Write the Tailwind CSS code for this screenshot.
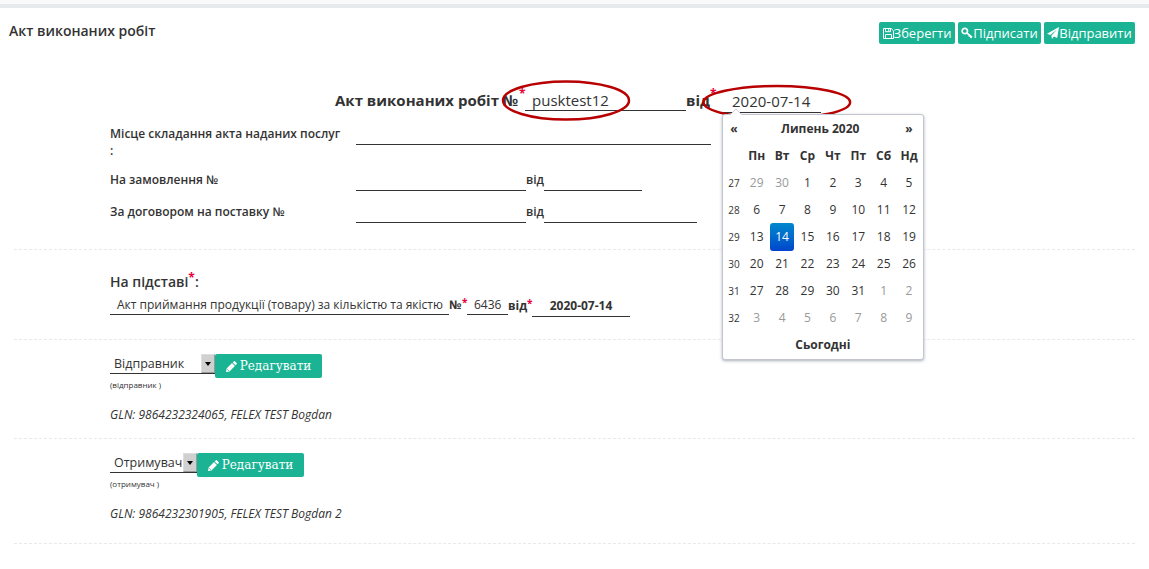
<!DOCTYPE html>
<html lang="uk">
<head>
<meta charset="utf-8">
<title>Акт виконаних робіт</title>
<script src="https://cdn.jsdelivr.net/npm/@tailwindcss/browser@4"></script>
</head>
<body class="relative h-[569px] w-[1149px] overflow-hidden bg-white font-['Open_Sans','Noto_Sans',sans-serif] text-[13px] leading-[18px] text-[#333] whitespace-nowrap">
<div class="h-2 border-b-4 border-[#e7eaec] bg-[#f9f8fa]"></div>
<header class="flex h-[72px] items-start justify-between pr-[14px] pl-[9px]">
  <h1 class="pt-[13px] text-[14px] font-semibold leading-5">Акт виконаних робіт</h1>
  <div class="flex gap-[3px] pt-[14px] text-white">
    <button class="flex h-[22px] w-[76px] items-center justify-center rounded-[2px] bg-[#1ab394]">
      <svg class="h-[11px] w-[11px] shrink-0" viewBox="0 0 11 11" fill="none" stroke="currentColor"><path d="M.5.5h7.7l2.3 2.3v7.7H.5zM2.5.5v3.2h5V.5M2.5 10.500V6.500h6v4M5.700 1v2"/></svg>Зберегти</button>
    <button class="flex h-[22px] w-[83px] items-center justify-center rounded-[2px] bg-[#1ab394]">
      <svg class="h-[12px] w-[12px] shrink-0" viewBox="0 0 12 12" fill="none" stroke="currentColor" stroke-width="1.700"><circle cx="3.800" cy="4" r="2.700"/><path d="M5.700 5.900l5.200 4.300M7.800 9.500l1.300-1.700M9.500 11l1.300-1.700"/></svg>Підписати</button>
    <button class="flex h-[22px] w-[91px] items-center justify-center rounded-[2px] bg-[#1ab394]">
      <svg class="h-[12px] w-[12px] shrink-0" viewBox="0 0 12 12" fill="currentColor"><path d="M12 0L10.200 11 6.800 9.600 5 12 4.300 8.800 10 2.500 3.200 8.100 0 6.800z"/></svg>Відправити</button>
  </div>
</header>
<main class="px-[14px]">
  <section class="h-[170px] border-b border-dashed border-[#e7eaec] pl-[96px]">
    <div class="flex h-[45px] items-start pl-[225px] text-[15px] leading-5">
      <b class="w-[184px] pt-[10px]">Акт виконаних робіт №</b>
      <span class="w-[6px] pt-[6px] text-[12px] font-bold leading-4 text-[#e8003c]">*</span>
      <span class="h-[31px] w-[161px] border-b border-[#333] pt-[10px] pl-[7px]">pusktest12</span>
      <b class="w-[24px] pt-[10px]">від</b>
      <span class="w-[10px] pt-[6px] text-[12px] font-bold leading-4 text-[#e8003c]">*</span>
      <span class="h-[33px] w-[101px] border-b border-[#333] pt-[11px] pl-[12px]">2020-07-14</span>
    </div>
    <div class="flex h-[46px] items-start text-[12px] font-semibold leading-[17px]">
      <span class="w-[246px]">Місце складання акта наданих послуг<br>:</span>
      <span class="h-[20px] w-[355px] border-b border-[#333]"></span>
    </div>
    <div class="flex h-[32px] items-start text-[12px] font-semibold leading-[17px]">
      <span class="w-[246px]">На замовлення №</span>
      <span class="h-[20px] w-[170px] border-b border-[#333]"></span>
      <span class="w-[18px]">від</span>
      <span class="h-[20px] w-[98px] border-b border-[#333]"></span>
    </div>
    <div class="flex h-[32px] items-start text-[12px] font-semibold leading-[17px]">
      <span class="w-[246px]">За договором на поставку №</span>
      <span class="h-[20px] w-[170px] border-b border-[#333]"></span>
      <span class="w-[18px]">від</span>
      <span class="h-[20px] w-[153px] border-b border-[#333]"></span>
    </div>
  </section>
  <section class="h-[90px] border-b border-dashed border-[#e7eaec] pl-[96px]">
    <div class="flex h-[46px] pt-[22px] text-[14px] font-semibold leading-5">На підставі<span class="-mt-[4px] text-[12px] font-bold text-[#e8003c]">*</span>:</div>
    <div class="flex items-start text-[12px]">
      <span class="h-[19px] w-[339px] border-b border-[#333] pl-[7px]">Акт приймання продукції (товару) за кількістю та якістю</span>
      <b class="w-[13px]">№</b>
      <b class="-mt-[3px] w-[5px] text-[10px] text-[#e8003c]">*</b>
      <span class="h-[19px] w-[41px] border-b border-[#333] pl-[7px]">6436</span>
      <b class="w-[19px] pt-px">від</b>
      <b class="-mt-[2px] w-[5px] text-[10px] text-[#e8003c]">*</b>
      <b class="h-[21px] w-[98px] border-b border-[#333] pt-px text-center">2020-07-14</b>
    </div>
  </section>
  <section class="h-[99px] border-b border-dashed border-[#e7eaec] pt-[14px] pl-[96px]">
    <div class="flex h-[24px] items-start">
      <div class="flex h-[20px] w-[105px] justify-between border-b border-[#333] pl-[4px] text-[12.500px] leading-[20px]">Відправник
        <span class="flex h-[19px] w-[14px] items-center justify-center border border-t-[#ddd] border-r-[#999] border-b-[#999] border-l-[#ddd] bg-[#d0d0d0]"><svg class="h-[4px] w-[6px]" viewBox="0 0 6 4"><path d="M0 0h6L3 4z"/></svg></span>
      </div>
      <button class="flex h-[24px] w-[107px] items-center justify-center gap-[3px] rounded-[2px] bg-[#1ab394] font-['DejaVu_Serif',serif] text-[12px] text-white">
        <svg class="h-[11px] w-[11px] shrink-0" viewBox="0 0 11 11" fill="currentColor"><path d="M7.700.4c.4-.4.9-.4 1.300 0l1.600 1.600c.4.4.4.9 0 1.300l-1 1L6.700 1.400zM6 2.100L8.900 5 3.500 10.400 0 11l.6-3.500z"/><path d="M1.200 8.200l1.600 1.600" stroke="#1ab394" stroke-width=".8"/></svg>Редагувати</button>
    </div>
    <div class="pt-[2px] text-[8px] leading-[10px]">(відправник )</div>
    <div class="pt-[16px] text-[12px] italic">GLN: 9864232324065, FELEX TEST Bogdan</div>
  </section>
  <section class="h-[105px] border-b border-dashed border-[#e7eaec] pt-[14px] pl-[96px]">
    <div class="flex h-[24px] items-start">
      <div class="flex h-[20px] w-[87px] justify-between border-b border-[#333] pl-[4px] text-[12.500px] leading-[20px]">Отримувач
        <span class="flex h-[19px] w-[14px] items-center justify-center border border-t-[#ddd] border-r-[#999] border-b-[#999] border-l-[#ddd] bg-[#d0d0d0]"><svg class="h-[4px] w-[6px]" viewBox="0 0 6 4"><path d="M0 0h6L3 4z"/></svg></span>
      </div>
      <button class="flex h-[24px] w-[107px] items-center justify-center gap-[3px] rounded-[2px] bg-[#1ab394] font-['DejaVu_Serif',serif] text-[12px] text-white">
        <svg class="h-[11px] w-[11px] shrink-0" viewBox="0 0 11 11" fill="currentColor"><path d="M7.700.4c.4-.4.9-.4 1.300 0l1.600 1.600c.4.4.4.9 0 1.300l-1 1L6.700 1.400zM6 2.100L8.900 5 3.500 10.400 0 11l.6-3.500z"/><path d="M1.200 8.200l1.600 1.600" stroke="#1ab394" stroke-width=".8"/></svg>Редагувати</button>
    </div>
    <div class="pt-[2px] text-[8px] leading-[10px]">(отримувач )</div>
    <div class="pt-[16px] text-[12px] italic">GLN: 9864232301905, FELEX TEST Bogdan 2</div>
  </section>
</main>

<!-- emphasis rings -->
<svg class="absolute top-0 left-0 h-[130px] w-[900px]" viewBox="0 0 900 130" fill="none" stroke="#b80000" stroke-width="2.500"><ellipse cx="566" cy="100.500" rx="63" ry="19"/><ellipse cx="776.800" cy="102.200" rx="73.300" ry="16.300"/></svg>

<!-- date picker -->
<div class="absolute top-[114px] left-[722px] w-[202px] rounded-[3px] border border-[#c3c5d0] bg-white pl-px shadow-[0_1px_3px_rgba(86,96,117,0.5)]">
  <svg class="absolute -top-[6px] left-[7px] h-[7px] w-[12px]" viewBox="0 0 12 7"><path d="M0 6L6 0l6 6v1H0z" fill="#fff"/><path d="M0 6L6 0l6 6" fill="none" stroke="#ccc"/></svg>
  <div class="grid h-[244px] grid-cols-[20px_repeat(7,25.400px)] grid-rows-9 items-center text-center text-[12px] leading-[18px]">
    <b>«</b><b class="col-span-6">Липень 2020</b><b>»</b>
    <i></i><b>Пн</b><b>Вт</b><b>Ср</b><b>Чт</b><b>Пт</b><b>Сб</b><b>Нд</b>
    <span class="text-[10px]">27</span><span class="text-[#999]">29</span><span class="text-[#999]">30</span><span>1</span><span>2</span><span>3</span><span>4</span><span>5</span>
    <span class="text-[10px]">28</span><span>6</span><span>7</span><span>8</span><span>9</span><span>10</span><span>11</span><span>12</span>
    <span class="text-[10px]">29</span><span>13</span><span class="mx-auto h-[28px] w-[24px] rounded-[3px] bg-linear-to-b from-[#0088cc] to-[#0044cc] leading-[28px] text-white">14</span><span>15</span><span>16</span><span>17</span><span>18</span><span>19</span>
    <span class="text-[10px]">30</span><span>20</span><span>21</span><span>22</span><span>23</span><span>24</span><span>25</span><span>26</span>
    <span class="text-[10px]">31</span><span>27</span><span>28</span><span>29</span><span>30</span><span>31</span><span class="text-[#999]">1</span><span class="text-[#999]">2</span>
    <span class="text-[10px]">32</span><span class="text-[#999]">3</span><span class="text-[#999]">4</span><span class="text-[#999]">5</span><span class="text-[#999]">6</span><span class="text-[#999]">7</span><span class="text-[#999]">8</span><span class="text-[#999]">9</span>
    <b class="col-span-8">Сьогодні</b>
  </div>
</div>
</body>
</html>
